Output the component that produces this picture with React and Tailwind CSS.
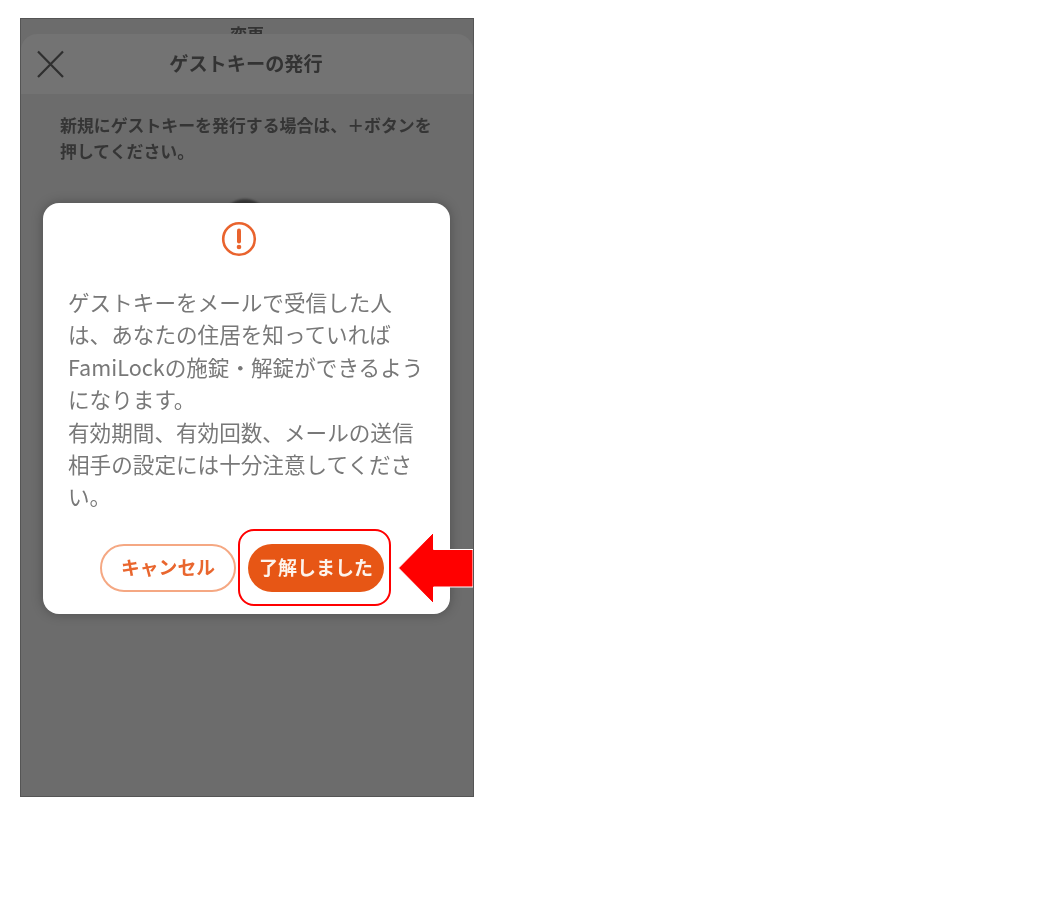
export default function App() {
  const jp = { fontFamily: '"Noto Sans CJK JP", "Noto Sans", sans-serif' };
  return (
    <div className="h-[906px] w-[1058px] bg-white pl-[20px] pt-[18px]" style={jp}>
      <div className="relative h-[779px] w-[454px] overflow-hidden border border-[#555555] bg-[#6c6c6c]">
        <div className="absolute left-0 right-0 top-[3px] text-center text-[17px] font-bold leading-[24px] text-[#333333] blur-[0.5px]">変更</div>
        <div className="relative mt-[15px] h-full rounded-t-[16px]">
          <div className="flex h-[60px] items-center rounded-t-[16px] bg-[#737373] px-[15px]">
            <svg width="28" height="28" viewBox="0 0 28 28" fill="none" stroke="#2f2f2f" strokeWidth="2.2" className="shrink-0 blur-[0.4px]">
              <path d="M2 1.5 L27 27 M27 1.5 L2 27" />
            </svg>
            <div className="flex-1 pb-[2px] pr-[30px] text-center text-[19.2px] font-bold text-[#333333] blur-[0.5px]">ゲストキーの発行</div>
          </div>
          <div className="pl-[39px] pt-[18px] text-[16.9px] font-bold leading-[25.6px] text-[#353535] blur-[0.5px]">
            <div className="whitespace-nowrap">新規にゲストキーを発行する場合は、{"\uFF0B"}ボタンを</div>
            <div className="whitespace-nowrap">押してください。</div>
          </div>
        </div>

        <div className="absolute left-[201px] top-[180px] h-[46px] w-[46px] rounded-full bg-[#3a3a3a] blur-[1px]" />

        <div className="absolute left-[22px] top-[184px] h-[411px] w-[407px] rounded-[16px] bg-white px-[25px] pt-[18px] shadow-[0_0_12px_rgba(0,0,0,0.28)]">
          <div className="flex justify-center pr-[16px]">
            <svg width="36" height="36" viewBox="0 0 36 36" fill="none" className="blur-[0.3px]">
              <circle cx="18" cy="18" r="15.8" stroke="#e9632d" strokeWidth="2.6" />
              <path d="M18 9.5 V20.5" stroke="#e9632d" strokeWidth="4" strokeLinecap="round" />
              <circle cx="18" cy="26" r="2.3" fill="#e9632d" />
            </svg>
          </div>
          <div className="mt-[29px] text-[21.6px] leading-[32.4px] text-[#787878] blur-[0.4px]">
            <div className="whitespace-nowrap">ゲストキーをメールで受信した人</div>
            <div className="whitespace-nowrap">は、あなたの住居を知っていれば</div>
            <div className="whitespace-nowrap">FamiLockの施錠・解錠ができるよう</div>
            <div className="whitespace-nowrap">になります。</div>
            <div className="whitespace-nowrap">有効期間、有効回数、メールの送信</div>
            <div className="whitespace-nowrap">相手の設定には十分注意してくださ</div>
            <div className="whitespace-nowrap">い。</div>
          </div>
          <div className="mt-[31px] flex justify-end gap-[12px] pr-[41px]">
            <div className="flex h-[48px] w-[136px] items-center justify-center rounded-full border-2 border-[#f5a883] bg-white pb-[2px] text-[18.8px] font-bold text-[#e9662e] blur-[0.3px]">キャンセル</div>
            <div className="flex h-[48px] w-[136px] items-center justify-center rounded-full bg-[#e75615] pb-[2px] text-[19px] font-bold text-[#fdf3ec] blur-[0.3px]">了解しました</div>
          </div>
        </div>

        <div className="absolute left-[217px] top-[510px] h-[77px] w-[153px] rounded-[16px] border-2 border-[#ff0000]" />
        <svg className="absolute left-[377px] top-[513px]" width="77" height="72" viewBox="0 0 77 72">
          <path d="M0.5 36 L35.5 0.5 V17.5 H75 V55 H35.5 V71.5 Z" fill="#ff0000" stroke="#ffffff" strokeWidth="1" />
        </svg>
      </div>
    </div>
  );
}
